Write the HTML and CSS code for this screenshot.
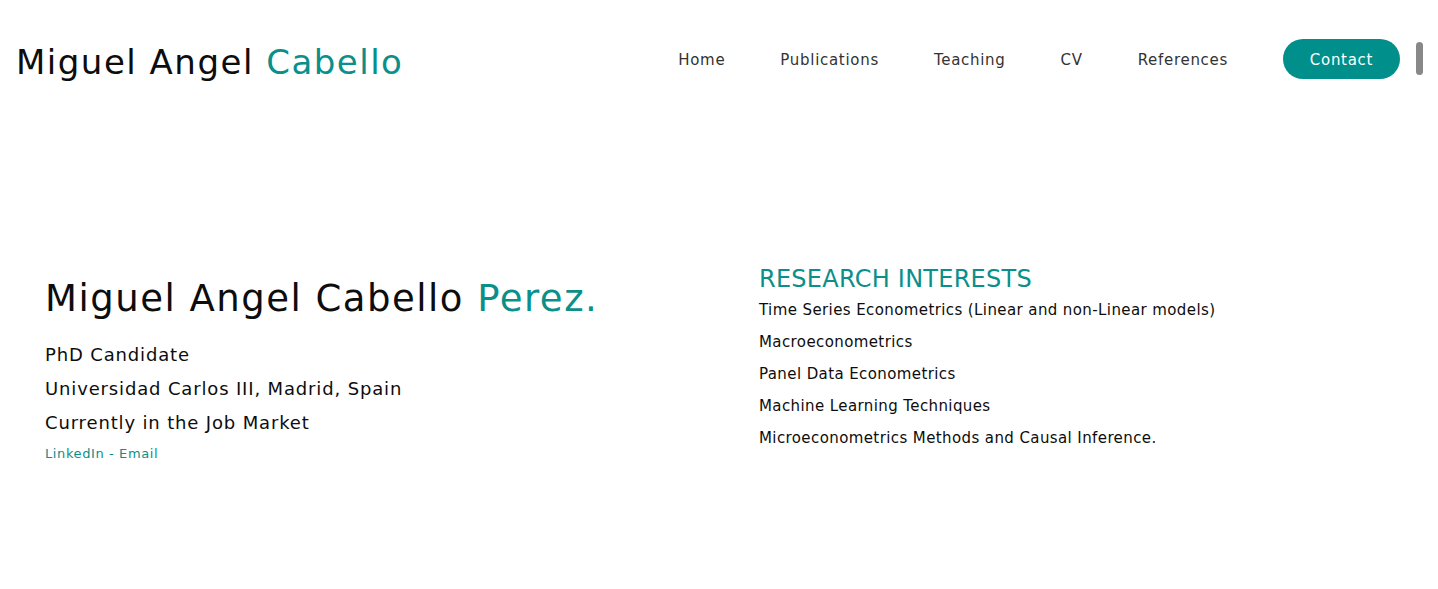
FILE: index.html
```html
<!DOCTYPE html>
<html lang="en">
<head>
<meta charset="utf-8">
<title>Miguel Angel Cabello</title>
<link rel="stylesheet" href="styles.css">
</head>
<body>
<header class="site-header">
  <a class="logo" href="#">Miguel Angel <span class="accent">Cabello</span></a>
  <nav class="nav">
    <a class="nav-link" href="#">Home</a>
    <a class="nav-link" href="#">Publications</a>
    <a class="nav-link" href="#">Teaching</a>
    <a class="nav-link" href="#">CV</a>
    <a class="nav-link" href="#">References</a>
    <a class="nav-btn" href="#">Contact</a>
  </nav>
</header>
<main class="hero">
  <section class="intro">
    <h1 class="name">Miguel Angel Cabello <span class="accent">Perez.</span></h1>
    <p class="role">PhD Candidate</p>
    <p class="role">Universidad Carlos III, Madrid, Spain</p>
    <p class="role">Currently in the Job Market</p>
    <p class="links"><a href="#">LinkedIn</a> - <a href="#">Email</a></p>
  </section>
  <section class="interests">
    <h2 class="interests-title">RESEARCH INTERESTS</h2>
    <ul class="interests-list">
      <li>Time Series Econometrics (Linear and non-Linear models)</li>
      <li>Macroeconometrics</li>
      <li>Panel Data Econometrics</li>
      <li>Machine Learning Techniques</li>
      <li>Microeconometrics Methods and Causal Inference.</li>
    </ul>
  </section>
</main>
<div class="scroll-thumb"></div>
</body>
</html>
```

FILE: styles.css
```css
* { box-sizing: border-box; }
html, body { margin: 0; padding: 0; }
body {
  font-family: "DejaVu Sans", "Open Sans", sans-serif;
  color: #0d0d0d;
  background: #fff;
  width: 1438px;
  height: 589px;
  overflow: hidden;
  position: relative;
}
a { text-decoration: none; color: inherit; }
.accent { color: #0a8f8a; }

.site-header {
  display: flex;
  align-items: center;
  justify-content: space-between;
  height: 118px;
  padding: 0 38px 0 16px;
}
.logo {
  font-size: 34px;
  line-height: 44px;
  font-weight: 400;
  letter-spacing: 1.5px;
  margin-top: 6px;
}
.nav {
  display: flex;
  align-items: center;
  gap: 55px;
}
.nav-link {
  font-size: 15px;
  line-height: 20px;
  color: #333;
  letter-spacing: 0.7px;
  padding-top: 2px;
}
.nav-btn {
  display: flex;
  align-items: center;
  justify-content: center;
  width: 117px;
  height: 40px;
  padding-top: 2px;
  border-radius: 20px;
  background: #008f8a;
  color: #fff;
  font-size: 15px;
  letter-spacing: 0.7px;
}

.hero {
  display: grid;
  grid-template-columns: 714px 1fr;
  padding: 146px 0 0 45px;
}
.name {
  font-size: 37px;
  font-weight: 400;
  line-height: 44px;
  margin: 13px 0 17px;
  letter-spacing: 1.5px;
}
.role {
  font-size: 18px;
  margin: 0;
  line-height: 34px;
  letter-spacing: 0.85px;
}
.links {
  font-size: 13px;
  line-height: 20px;
  color: #0a8f8a;
  margin: 4px 0 0;
  letter-spacing: 0.6px;
}
.interests-title {
  font-size: 24px;
  font-weight: 400;
  color: #0a8f8a;
  margin: 0;
  line-height: 30px;
  letter-spacing: 0.25px;
}
.interests-list {
  list-style: none;
  margin: 0;
  padding: 0;
}
.interests-list li {
  font-size: 15px;
  line-height: 32px;
  letter-spacing: 0.4px;
}
.scroll-thumb {
  position: absolute;
  left: 1416px;
  top: 42px;
  width: 7px;
  height: 33px;
  border-radius: 4px;
  background: #888;
}
```
